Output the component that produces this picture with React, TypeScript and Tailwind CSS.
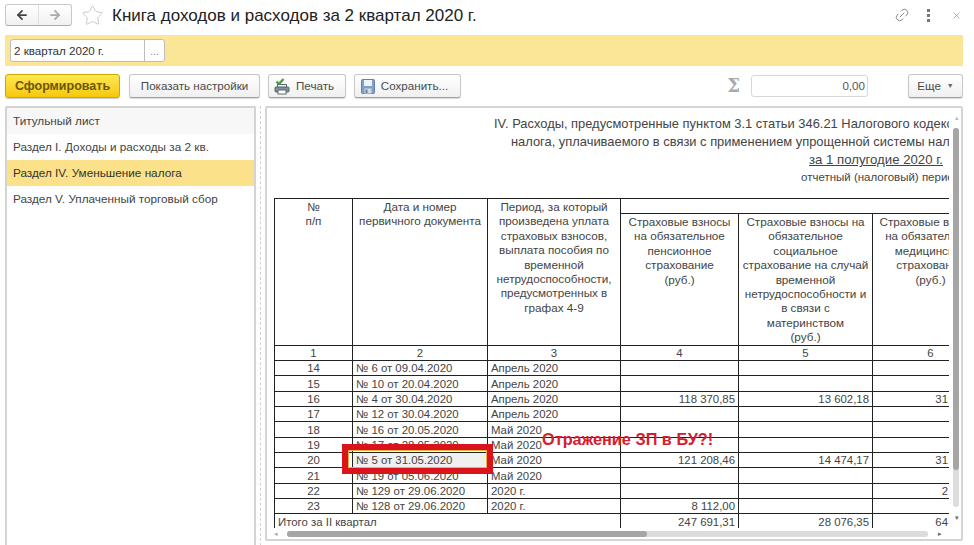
import { ArrowLeft, ArrowRight, Link2, Star, X } from 'lucide-react';

const rows = [
  ['14', '№ 6 от 09.04.2020', 'Апрель 2020', '', '', ''],
  ['15', '№ 10 от 20.04.2020', 'Апрель 2020', '', '', ''],
  ['16', '№ 4 от 30.04.2020', 'Апрель 2020', '118 370,85', '13 602,18', '31'],
  ['17', '№ 12 от 30.04.2020', 'Апрель 2020', '', '', ''],
  ['18', '№ 16 от 20.05.2020', 'Май 2020', '', '', ''],
  ['19', '№ 17 от 28.05.2020', 'Май 2020', '', '', ''],
  ['20', '№ 5 от 31.05.2020', 'Май 2020', '121 208,46', '14 474,17', '31'],
  ['21', '№ 19 от 05.06.2020', 'Май 2020', '', '', ''],
  ['22', '№ 129 от 29.06.2020', '2020 г.', '', '', '2'],
  ['23', '№ 128 от 29.06.2020', '2020 г.', '8 112,00', '', ''],
];

const sections = ['Титульный лист', 'Раздел I. Доходы и расходы за 2 кв.', 'Раздел IV. Уменьшение налога', 'Раздел V. Уплаченный торговый сбор'];

const btn = 'h-6 shrink-0 flex items-center justify-center gap-1.5 rounded-[3px] border border-[#c8c8c8] border-b-[#a0a0a0] bg-gradient-to-b from-white to-[#f0f0f0] text-[11.6px] text-[#4a4a4a] shadow-[0_1px_1px_rgba(0,0,0,0.15)]';
const th = 'border border-[#222] align-top font-normal text-center px-0.5 leading-[14.4px] text-[11.7px]';
const td = 'border border-[#222] h-[15.33px] p-0 leading-[14px] align-bottom overflow-hidden whitespace-nowrap';

function PrintIcon() {
  return (
    <svg width="16" height="17" viewBox="0 0 16 17">
      <path d="M2.5 3.5l2.5 2.5 4.5-5" fill="none" stroke="#46a03c" strokeWidth="2.4" />
      <rect x="3.5" y="6.5" width="9" height="3" fill="#f0f0f0" stroke="#5f6b70" />
      <rect x="1" y="9" width="14" height="5" rx="1" fill="#7f9199" stroke="#56656b" />
      <rect x="4" y="12" width="8" height="4" fill="#fff" stroke="#5f6b70" />
    </svg>
  );
}

function SaveIcon() {
  return (
    <svg width="14" height="15" viewBox="0 0 14 15">
      <rect x="0.5" y="0.5" width="13" height="14" rx="1" fill="#7f9fc8" stroke="#6482a8" />
      <rect x="3" y="1" width="8" height="6" fill="#eef3f9" />
      <rect x="3.5" y="9.5" width="7" height="5" fill="#d5dbe2" />
      <rect x="4.5" y="10.5" width="2" height="3.5" fill="#6482a8" />
    </svg>
  );
}

export default function App() {
  return (
    <div className="w-[974px] h-[545px] overflow-hidden bg-white flex flex-col pl-[5px] pr-[11px] font-['Liberation_Sans',Arial,sans-serif] text-[#444]">
      {/* Title bar */}
      <div className="h-[35px] shrink-0 flex items-start pt-1">
        <div className="h-[22px] w-[67px] flex rounded-[3px] border border-[#c8c8c8] border-b-[#aaa] bg-gradient-to-b from-white to-[#f1f1f1]">
          <div className="w-[33px] flex items-center justify-center border-r border-[#e0e0e0]">
            <ArrowLeft size={14} strokeWidth={3} className="text-[#444]" />
          </div>
          <div className="flex-1 flex items-center justify-center">
            <ArrowRight size={14} strokeWidth={3} className="text-[#aaa]" />
          </div>
        </div>
        <Star size={23} strokeWidth={1} className="ml-[9px] text-[#c8c8c8]" />
        <div className="ml-2 text-[17px] leading-[24px] text-[#222] whitespace-nowrap">Книга доходов и расходов за 2 квартал 2020 г.</div>
        <div className="ml-auto flex items-center h-[22px] text-[#888]">
          <Link2 size={16} strokeWidth={1.4} className="-rotate-45" />
          <div className="ml-[17px] flex flex-col gap-[2px]">
            <span className="w-[3px] h-[3px] bg-[#777]" />
            <span className="w-[3px] h-[3px] bg-[#777]" />
            <span className="w-[3px] h-[3px] bg-[#777]" />
          </div>
          <X size={11} strokeWidth={1.4} className="ml-[21px] mr-[1px]" />
        </div>
      </div>

      {/* Period band */}
      <div className="h-[31px] shrink-0 bg-[#fbe596] flex items-center pl-[5px]">
        <div className="h-[23px] w-[155px] flex rounded-[3px] border border-[#bdbdbd] bg-white text-[11.6px] text-[#333]">
          <div className="w-[134px] pl-[3px] leading-[21px] border-r border-[#bdbdbd]">2 квартал 2020 г.</div>
          <div className="flex-1 text-center leading-[24px] text-[10px] text-[#888]">...</div>
        </div>
      </div>

      {/* Command bar */}
      <div className="h-[40px] shrink-0 flex items-start pt-2">
        <button className="h-6 w-[115px] shrink-0 rounded-[3px] border border-[#c9a800] bg-gradient-to-b from-[#ffe74d] to-[#f5c800] text-[12.5px] font-bold text-[#6b5800] shadow-[0_1px_1px_rgba(0,0,0,0.2)]">Сформировать</button>
        <button className={`${btn} w-[131px] ml-[9px]`}>Показать настройки</button>
        <button className={`${btn} w-[78px] ml-2 pr-1.5`}><PrintIcon />Печать</button>
        <button className={`${btn} w-[107px] ml-2 pr-1.5`}><SaveIcon />Сохранить...</button>
        <div className="ml-[261px] w-[23px] shrink-0 text-center text-[18px] leading-[24px] font-bold text-[#aaa] font-['DejaVu_Serif',serif]">Σ</div>
        <div className="ml-[6px] h-[22px] w-[117px] shrink-0 mt-px rounded-[3px] border border-[#d8d8d8] text-right pr-[2px] text-[11.6px] leading-[20px] text-[#555]">0,00</div>
        <button className={`${btn} w-[55px] ml-[40px]`}>Еще <span className="text-[7px] text-[#666]">▼</span></button>
      </div>

      {/* Body */}
      <div className="flex-1 min-h-0 flex items-start text-[11.4px]">
        <div className="w-[251px] h-[445px] shrink-0 border-2 border-[#d4d4d4] border-b-0 rounded-t-[2px] text-[11.75px]">
          {sections.map((s, i) => (
            <div
              key={s}
              className={`h-[26px] pl-1.5 leading-[25px] whitespace-nowrap ${i === 0 ? 'bg-[#f7f7f7]' : ''} ${i === 2 ? 'bg-[#fbe18a] text-[#333]' : ''}`}
            >
              {s}
            </div>
          ))}
        </div>

        {/* Splitter */}
        <div className="ml-1 mr-1 h-[445px] w-px shrink-0 border-l border-dashed border-[#d0d0d0]" />

        <div className="relative w-[698px] h-[435px] border-2 border-[#d4d4d4] rounded-[2px] overflow-hidden">
          <div className="w-[682px] h-[420px] overflow-hidden pl-[7px]">
            <div className="w-[800px]">
              {/* Report heading */}
              <div className="h-[90px] pt-[7px] pl-[220px] text-[#444] whitespace-nowrap">
                <div className="text-[12.9px] leading-[18px]">IV. Расходы, предусмотренные пунктом 3.1 статьи 346.21 Налогового кодекса Российской Федерации</div>
                <div className="text-[12.9px] leading-[18px] pl-[17px]">налога, уплачиваемого в связи с применением упрощенной системы налогообложения</div>
                <div className="text-[13.2px] leading-[18px] pl-[315px] underline">за 1 полугодие 2020 г.</div>
                <div className="text-[11.5px] leading-[16px] pl-[307px]">отчетный (налоговый) период</div>
              </div>

              {/* Report table */}
              <table className="table-fixed border-collapse w-[714px]">
                <colgroup>
                  <col className="w-[78px]" />
                  <col className="w-[135px]" />
                  <col className="w-[133px]" />
                  <col className="w-[118px]" />
                  <col className="w-[134px]" />
                  <col className="w-[116px]" />
                </colgroup>
                <thead>
                  <tr>
                    <th rowSpan={2} className={`${th} pt-px`}>№<br />п/п</th>
                    <th rowSpan={2} className={`${th} pt-px`}>Дата и номер<br />первичного документа</th>
                    <th rowSpan={2} className={`${th} pt-px`}>Период, за который произведена уплата страховых взносов, выплата пособия по временной нетрудоспособности, предусмотренных в графах 4-9</th>
                    <th colSpan={3} className={`${th} h-[15px]`}></th>
                  </tr>
                  <tr className="h-[131px]">
                    <th className={`${th} pt-px`}>Страховые взносы на обязательное пенсионное страхование<br />(руб.)</th>
                    <th className={`${th} pt-px`}>Страховые взносы на обязательное социальное страхование на случай временной нетрудоспособности и в связи с материнством<br />(руб.)</th>
                    <th className={`${th} pt-px`}>Страховые взносы на обязательное медицинское страхование<br />(руб.)</th>
                  </tr>
                </thead>
                <tbody>
                  <tr className="text-center">
                    {['1', '2', '3', '4', '5', '6'].map((n) => (
                      <td key={n} className={td}>{n}</td>
                    ))}
                  </tr>
                  {rows.map((r) => (
                    <tr key={r[0]}>
                      <td className={`${td} text-center`}>{r[0]}</td>
                      <td className={`${td} pl-[3px] ${r[0] === '20' ? 'bg-[#f0f0f0]' : ''}`}>{r[1]}</td>
                      <td className={`${td} pl-[3px]`}>{r[2]}</td>
                      <td className={`${td} text-right pr-[3px]`}>{r[3]}</td>
                      <td className={`${td} text-right pr-[3px]`}>{r[4]}</td>
                      <td className={`${td} text-right pr-[40px]`}>{r[5]}</td>
                    </tr>
                  ))}
                  <tr>
                    <td colSpan={3} className="h-[15px] p-0 pl-[3px] leading-[14px] border-l border-[#222]">Итого за II квартал</td>
                    <td className="p-0 pr-[3px] text-right leading-[14px] border-x border-[#222]">247 691,31</td>
                    <td className="p-0 pr-[3px] text-right leading-[14px] border-x border-[#222]">28 076,35</td>
                    <td className="p-0 pr-[40px] text-right leading-[14px] border-x border-[#222]">64</td>
                  </tr>
                </tbody>
              </table>
            </div>
          </div>

          {/* Scrollbars */}
          <div className="absolute right-[2px] top-[20px] w-[6px] h-[379px] rounded-full bg-[#dcdcdc]">
            <div className="w-full h-[342px] rounded-full bg-[#a6a6a6]" />
          </div>
          <div className="absolute left-[20px] bottom-[2px] w-[641px] h-[6px] rounded-full bg-[#dcdcdc]">
            <div className="h-full w-[360px] rounded-full bg-[#a6a6a6]" />
          </div>
          <span className="absolute left-[7px] bottom-[2px] text-[7px] leading-[7px] text-[#aaa]">◂</span>
          <span className="absolute right-[19px] bottom-[2px] text-[7px] leading-[7px] text-[#666]">▸</span>
          <span className="absolute right-[2px] top-[6px] text-[7px] leading-[7px] text-[#bbb]">▴</span>
          <span className="absolute right-[2px] bottom-[18px] text-[7px] leading-[7px] text-[#666]">▾</span>

          {/* Annotation */}
          <div className="absolute left-[75px] top-[336px] w-[151px] h-[30px] border-[6px] border-[#d9141c]">
            <div className="w-full h-full border border-[#f0b040]" />
          </div>
          <div className="absolute left-[275px] top-[321px] text-[16.3px] leading-[20px] font-bold text-[#d32030] whitespace-nowrap">Отражение ЗП в БУ?!</div>
        </div>
      </div>
    </div>
  );
}
